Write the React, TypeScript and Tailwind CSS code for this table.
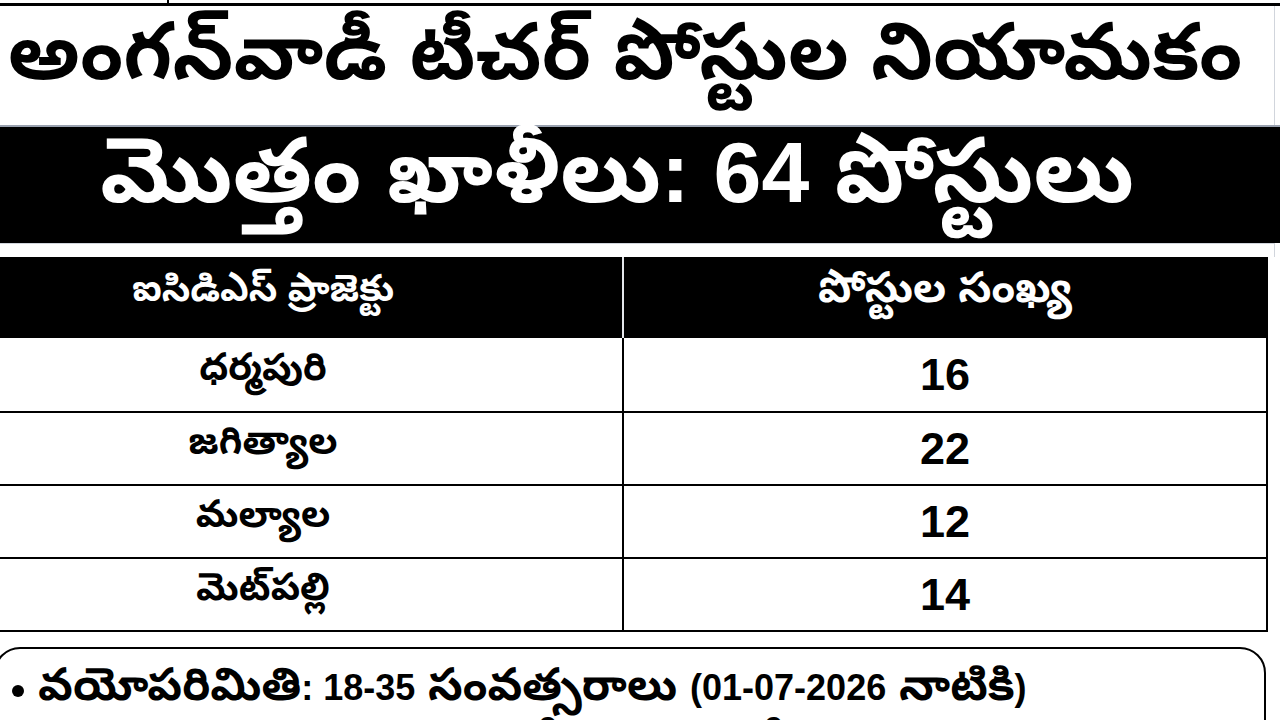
import React from "react";

const tel = { fontFamily: '"Noto Sans Telugu", "Lohit Telugu", "Pothana2000", "Noto Sans", sans-serif' };
const lat = { fontFamily: '"Liberation Sans", Arial, sans-serif' };

const rows: [string, string][] = [
  ["ధర్మపురి", "16"],
  ["జగిత్యాల", "22"],
  ["మల్యాల", "12"],
  ["మెట్‌పల్లి", "14"],
];

export default function App() {
  return (
    <div className="w-[1280px] h-[720px] overflow-hidden bg-white flex flex-col" style={tel}>
      <div className="h-[3px] shrink-0 flex">
        <div className="w-[167px]" />
        <div className="w-[2px] bg-black" />
      </div>
      <div className="h-[3px] shrink-0 bg-black" />
      <div className="h-[119px] shrink-0 flex items-center pl-[8px] pb-[4px] border-r border-gray-300 mr-[5px]">
        <span className="text-[79px] font-bold text-black leading-none whitespace-nowrap">అంగన్‌వాడీ టీచర్ పోస్టుల నియామకం</span>
      </div>
      <div className="h-[118px] shrink-0 bg-black border-t-2 border-gray-400 flex items-center pl-[100px] pb-[12px]">
        <span className="text-[90px] font-bold text-white leading-none whitespace-nowrap">
          మొత్తం ఖాళీలు<span className="text-[86px]" style={lat}>: 64</span> పోస్టులు
        </span>
      </div>
      <div className="h-[14px] shrink-0 border-t border-gray-300 mr-[5px] border-r" />
      <div className="shrink-0 ml-[-98px] w-[1366px] border-x-2 border-b-2 border-black flex flex-col">
        <div className="h-[81px] bg-black flex text-white">
          <div className="w-[720px] flex items-center justify-center border-r-2 border-gray-200 pb-[6px]">
            <span className="text-[37px] font-bold whitespace-nowrap">ఐసిడిఎస్ ప్రాజెక్టు</span>
          </div>
          <div className="flex-1 flex items-center justify-center pb-[6px]">
            <span className="text-[43px] font-bold whitespace-nowrap">పోస్టుల సంఖ్య</span>
          </div>
        </div>
        {rows.map(([name, n], i) => (
          <div key={i} className={`h-[73px] flex ${i > 0 ? "border-t-2 border-black" : ""}`}>
            <div className="w-[720px] flex items-center justify-center border-r-2 border-black pb-[4px]">
              <span className="text-[38px] font-bold whitespace-nowrap">{name}</span>
            </div>
            <div className="flex-1 flex items-center justify-center">
              <span className="text-[45px] font-bold" style={lat}>{n}</span>
            </div>
          </div>
        ))}
      </div>
      <div className="h-[15px] shrink-0" />
      <div className="shrink-0 ml-[-6px] w-[1272px] border-2 border-black rounded-tr-[26px] rounded-tl-[26px] pl-[16px] pt-[20px] h-[130px]">
        <div className="flex items-center gap-[14px] h-[44px]">
          <span className="w-[12px] h-[12px] rounded-full bg-black inline-block" />
          <span className="text-[45px] font-bold whitespace-nowrap leading-none">
            వయోపరిమితి<span className="text-[36px]" style={lat}>: 18-35</span> సంవత్సరాలు <span className="text-[36px]" style={lat}>(01-07-2026</span> నాటికి<span className="text-[36px]" style={lat}>)</span>
          </span>
        </div>
        <div className="mt-[12px] pl-[260px] text-[45px] font-bold whitespace-nowrap leading-none">విద్యార్హత: పదో తరగతి ఉత్తీర్ణత</div>
      </div>
    </div>
  );
}
